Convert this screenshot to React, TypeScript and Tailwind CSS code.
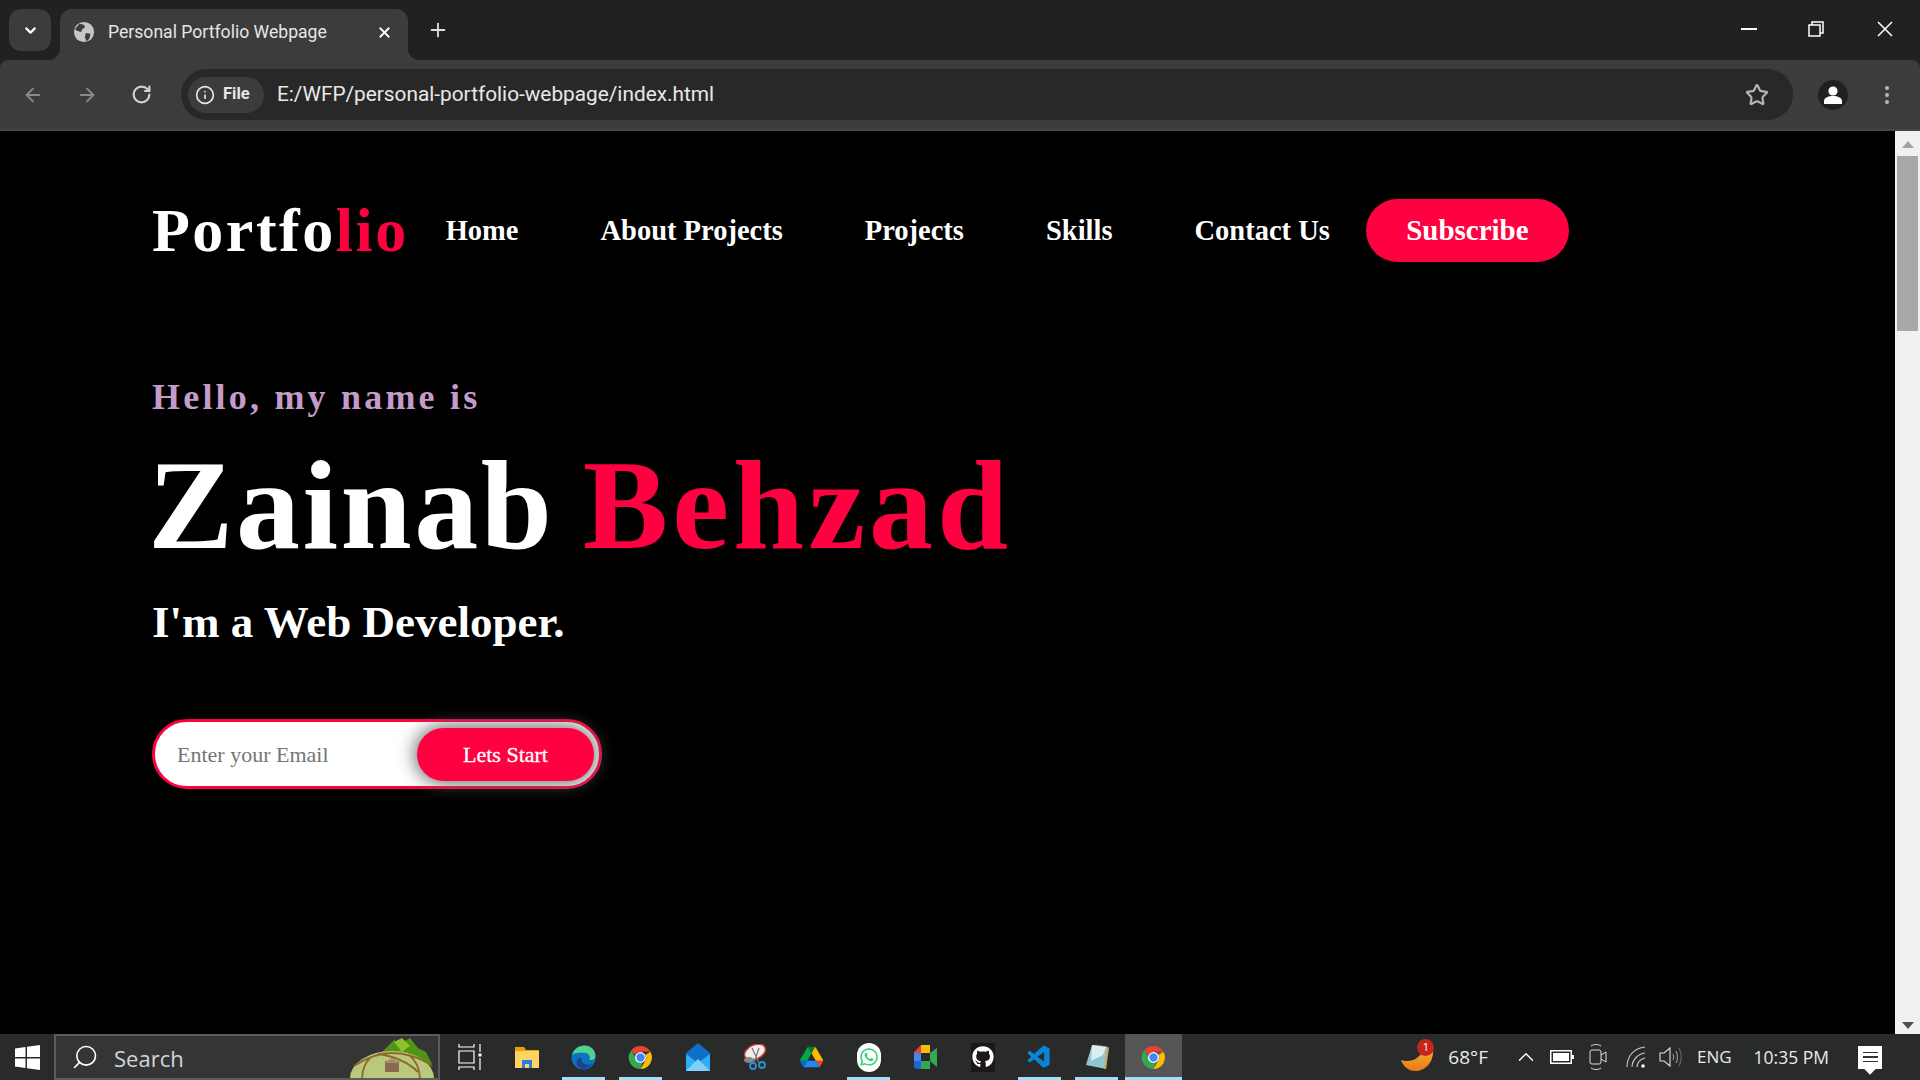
import { FaWhatsapp, FaGithub } from 'react-icons/fa';
import { VscVscode } from 'react-icons/vsc';
import { X, Plus, ChevronDown, ArrowLeft, ArrowRight, RotateCw, Info, Star, EllipsisVertical, Search, ChevronUp } from 'lucide-react';

const serif = "font-['Liberation_Serif',serif]";

// Chrome logo, used twice in the taskbar
function ChromeLogo() {
  return (
    <svg width="25" height="25" viewBox="0 0 48 48">
      <path d="M24 2a22 22 0 0 1 19.05 11H24a11 11 0 0 0-10.2 6.9L6.5 10A22 22 0 0 1 24 2z" fill="#ea4335" />
      <path d="M43.05 13A22 22 0 0 1 24 46l9.5-16.5A11 11 0 0 0 33.5 18.5L43.05 13z" fill="#fbbc04" />
      <path d="M24 46A22 22 0 0 1 6.5 10l9.5 16.5A11 11 0 0 0 28 34.3L24 46z" fill="#34a853" />
      <circle cx="24" cy="24" r="10.5" fill="#fff" />
      <circle cx="24" cy="24" r="8" fill="#4285f4" />
    </svg>
  );
}

function TabBar() {
  return (
    <div className="h-[60px] flex items-start pt-[9px] pl-[9px] bg-[#202221]">
      <div className="w-[42px] h-[42px] rounded-xl bg-[#3c3c3c] flex items-center justify-center">
        <ChevronDown size={17} strokeWidth={3} className="text-white" />
      </div>
      <div className="relative ml-[9px] w-[348px] h-[51px] bg-[#3c3c3c] rounded-t-xl flex items-center pl-[13px] pb-[5px] text-[#e6e6e6]">
        <svg width="22" height="22" viewBox="0 0 24 24">
          <circle cx="12" cy="12" r="11" fill="#c3c7ca" />
          <path d="M7 3l5 1 1 3-3 2-1 3-4-1-3-2zM14 13l5 1-1 5-3 3-2-4z" fill="#3c3c3c" />
        </svg>
        <span className="ml-[13px] font-['Roboto',sans-serif] text-[17.6px] w-[268px] whitespace-nowrap">Personal Portfolio Webpage</span>
        <X size={17} strokeWidth={2.5} className="text-white" />
        <div className="absolute -left-[12px] bottom-0 w-[12px] h-[12px] bg-[radial-gradient(circle_at_0_0,#202221_12px,#3c3c3c_12.5px)]" />
        <div className="absolute -right-[12px] bottom-0 w-[12px] h-[12px] bg-[radial-gradient(circle_at_100%_0,#202221_12px,#3c3c3c_12.5px)]" />
      </div>
      <Plus size={22} className="ml-[19px] mt-[10px] text-[#dedede]" />
      <div className="ml-auto flex items-center h-[40px] text-white">
        <div className="w-[16px] h-[2px] bg-white mr-[51px]" />
        <svg width="16" height="16" viewBox="0 0 16 16" fill="none" stroke="#fff" strokeWidth="1.5" className="mr-[53px]">
          <rect x="1" y="4" width="11" height="11" />
          <path d="M4 4V1h11v11h-3" />
        </svg>
        <svg width="16" height="16" viewBox="0 0 16 16" fill="none" stroke="#fff" strokeWidth="1.5" className="mr-[27px]">
          <path d="M1 1l14 14M15 1L1 15" />
        </svg>
      </div>
    </div>
  );
}

function ToolBar() {
  return (
    <div className="h-[71px] bg-[#3c3c3c] border-b-2 border-[#464646] rounded-t-lg flex items-start pt-[9px]">
      <div className="w-[181px] h-[51px] flex items-center text-[#8a8a8a] shrink-0">
        <ArrowLeft size={22} className="ml-[22px]" />
        <ArrowRight size={22} className="ml-[32px]" />
        <RotateCw size={21} className="ml-[33px] text-[#d0d0d0]" strokeWidth={2.5} />
      </div>
      <div className="w-[1612px] h-[51px] rounded-full bg-[#282828] flex items-center pl-[7px] pr-[24px]">
        <div className="w-[76px] h-[36px] rounded-full bg-[#3c3c3c] flex items-center pl-[7px] gap-[8px] text-[#e6e6e6]">
          <Info size={20} />
          <span className="font-['Roboto',sans-serif] text-[16.500px] font-bold">File</span>
        </div>
        <span className="ml-[13px] font-['Roboto',sans-serif] text-[20.800px] text-[#e8e8e8]">E:/WFP/personal-portfolio-webpage/index.html</span>
        <Star size={24} strokeWidth={2.2} className="ml-auto text-[#b4b4b4]" />
      </div>
      <div className="h-[51px] flex items-center flex-1">
        <div className="ml-[25px] w-[30px] h-[30px] rounded-full bg-[#202221] flex items-center justify-center">
          <svg width="20" height="20" viewBox="0 0 20 20" fill="#fff">
            <circle cx="10" cy="6" r="4.6" />
            <path d="M1 19v-3c0-3 4-5 9-5s9 2 9 5v3z" />
          </svg>
        </div>
        <EllipsisVertical size={24} className="ml-[27px] text-[#b8b8b8]" />
      </div>
    </div>
  );
}

function Page() {
  const links = ['Home', 'About Projects', 'Projects', 'Skills', 'Contact Us'];
  return (
    <main className={`flex-1 bg-black text-white pl-[152px] ${serif}`}>
      <nav className="flex items-center pt-[68px]">
        <h1 className="text-[62px] leading-[63px] font-bold tracking-[2.5px]">
          Portfo<span className="text-[#ff0040]">lio</span>
        </h1>
        <ul className="flex gap-[82px] ml-[37px] mt-[1px] text-[28.500px] font-bold">
          {links.map((l) => (
            <li key={l}>{l}</li>
          ))}
        </ul>
        <button className="ml-[36px] w-[203px] h-[63px] rounded-full bg-[#ff0040] text-[29px] font-bold">Subscribe</button>
      </nav>
      <p className="mt-[115px] text-[36px] leading-[40px] font-bold text-[#c59bc9] tracking-[3.2px]">Hello, my name is</p>
      <h2 className="mt-[23px] -ml-[4px] text-[128px] leading-[130px] font-bold tracking-[2.5px]">
        Zainab <span className="-ml-[6px] tracking-[4px] text-[#ff0040]">Behzad</span>
      </h2>
      <h3 className="mt-[27px] text-[45px] leading-[50px] font-bold">I'm a Web Developer.</h3>
      <div className="mt-[72px] w-[450px] h-[70px] rounded-full border-[3px] border-[#ff0040] bg-white flex items-center pl-[22px] pr-[5px]">
        <input placeholder="Enter your Email" className="flex-1 min-w-0 text-[22px] text-black placeholder:text-[#757575] outline-none bg-transparent" />
        <button className="w-[177px] h-[53px] rounded-full bg-[#ff0040] text-[22px] [-webkit-text-stroke:0.3px_white] shadow-[0_0_18px_2px_#666]">Lets Start</button>
      </div>
    </main>
  );
}

function ScrollBar() {
  return (
    <div className="w-[25px] bg-[#f1f1f1] flex flex-col items-center">
      <svg width="12" height="7" viewBox="0 0 12 7" className="mt-[10px] mb-[8px]"><path d="M6 0l6 7H0z" fill="#a3a3a3" /></svg>
      <div className="w-[21px] h-[175px] bg-[#a8a8a8]" />
      <div className="flex-1" />
      <svg width="12" height="7" viewBox="0 0 12 7" className="mb-[5px]"><path d="M6 7L12 0H0z" fill="#505050" /></svg>
    </div>
  );
}

function Cell({ open, active, children }: { open?: boolean; active?: boolean; children: React.ReactNode }) {
  return (
    <div className={`relative w-[57px] h-full flex items-center justify-center ${active ? 'bg-[#555555]' : ''}`}>
      {children}
      {open && <div className={`absolute bottom-0 h-[3px] bg-[#a6dcf7] ${active ? 'w-full' : 'w-[43px]'}`} />}
    </div>
  );
}

function TaskBar() {
  return (
    <footer className="h-[46px] shrink-0 bg-[#292b2b] flex items-center text-[#eaeaea] font-['Open_Sans',sans-serif]">
      <div className="w-[54px] flex justify-center">
        <svg width="25" height="25" viewBox="0 0 25 25" fill="#fff">
          <path d="M0 3.5l10.5-1.5v10H0zM12 1.8L25 0v12H12zM0 13.5h10.5V23L0 21.5zM12 13.5h13V25l-13-1.8z" />
        </svg>
      </div>
      <div className="relative w-[386px] h-full bg-[#353535] border-2 border-[#5c5c5c] flex items-center pl-[15px] overflow-hidden">
        <Search size={28} strokeWidth={1.4} className="-scale-x-100 text-white" />
        <span className="ml-[15px] mt-[3px] text-[22px] text-[#cfd8de]">Search</span>
        {/* melon hut doodle on the search box */}
        <svg width="90" height="44" viewBox="0 0 90 44" className="absolute right-0 top-0">
          <path d="M32 18l14-14 6 4 10-6 8 10 8 4 6 12-30 4z" fill="#4f9412" />
          <path d="M46 6l8-4 8 8-8 6z" fill="#8cc22a" />
          <ellipse cx="44" cy="42" rx="42" ry="27" fill="#b8c87c" />
          <path d="M6 30c12-8 26-13 38-13s28 4 40 13M22 22c-6 6-8 14-8 22M60 18c8 6 12 16 12 26M30 18c14 2 30 8 40 18" fill="none" stroke="#8d6a2b" strokeWidth="1.800" />
          <rect x="37" y="25" width="14" height="11" fill="#8a6a50" />
          <path d="M36 27l8-5 8 5z" fill="#a98a70" />
        </svg>
      </div>
      <div className="flex h-full items-center ml-[1px]">
        <Cell>
          <svg width="24" height="28" viewBox="0 0 24 28" fill="none" stroke="#fff" strokeWidth="1.2">
            <path d="M1 1v3h15V1M1 8h15v12H1zM1 27v-3h15v3M22 1v8M22 15v12" />
            <rect x="20.5" y="10.5" width="3" height="3" fill="#fff" stroke="none" />
          </svg>
        </Cell>
        <Cell>
          <svg width="24" height="24" viewBox="0 0 24 24">
            <path d="M0 2h9l2 3h13v5H0z" fill="#e8a20c" />
            <path d="M0 6h24v17H0z" fill="#fcd462" />
            <path d="M7 23v-8h10v8h-3v-4h-4v4z" fill="#2a7de1" />
          </svg>
        </Cell>
        <Cell open>
          <svg width="25" height="25" viewBox="0 0 48 48">
            <circle cx="24" cy="24" r="23" fill="#0c72c4" />
            <path d="M2 20C5 8 16 1 26 1c12 0 21 9 21 20 0 6-6 9-12 7 3-5 0-13-10-13C14 15 4 16 2 20z" fill="#4ed28c" />
            <path d="M20 27c0 7 7 12 14 11 3 0 6-2 8-4-4 8-13 13-22 11C10 42 8 32 14 26c2-2 6-2 6 1z" fill="#1f3f8f" />
          </svg>
        </Cell>
        <Cell open><ChromeLogo /></Cell>
        <Cell>
          <svg width="24" height="28" viewBox="0 0 24 28">
            <path d="M0 10L12 0l12 10v17H0z" fill="#0f6fc6" />
            <path d="M0 11l12 9 12-9v17H0z" fill="#2eb0f5" />
            <path d="M0 28l12-12 12 12z" fill="#7fd0fa" />
          </svg>
        </Cell>
        <Cell>
          <svg width="24" height="26" viewBox="0 0 24 26" fill="none">
            <ellipse cx="12" cy="8" rx="11" ry="7" transform="rotate(-25 12 8)" fill="#eee" stroke="#d93a3a" strokeWidth="1.5" />
            <ellipse cx="6" cy="16" rx="5" ry="3" fill="#888" />
            <path d="M9 4l7 15M16 4l-5 15" stroke="#777" strokeWidth="1.2" />
            <circle cx="10" cy="22" r="3" stroke="#2b8fd8" strokeWidth="1.8" />
            <circle cx="19" cy="21" r="3" stroke="#2b8fd8" strokeWidth="1.8" />
          </svg>
        </Cell>
        <Cell>
          <svg width="23" height="24" viewBox="0 0 87 78">
            <path d="M6.6 66.9l3.9 6.7c.8 1.4 2 2.5 3.3 3.3L27.5 53H0c0 1.6.4 3.100 1.2 4.500z" fill="#0066da" />
            <path d="M43.7 25L30 1.200C28.600 2 27.500 3.100 26.700 4.500L1.200 48.500C.4 49.900 0 51.400 0 53h27.500z" fill="#00ac47" />
            <path d="M73.600 76.900c1.300-.8 2.500-1.900 3.300-3.300l1.600-2.750 7.650-13.250c.8-1.400 1.200-2.900 1.200-4.500H59.800l5.850 11.500z" fill="#ea4335" />
            <path d="M43.700 25L57.400 1.200C56.100.4 54.500 0 52.900 0H34.500c-1.600 0-3.200.45-4.500 1.200z" fill="#00832d" />
            <path d="M59.800 53H27.500L13.800 76.800c1.300.8 2.900 1.200 4.500 1.200h50.800c1.600 0 3.200-.45 4.500-1.200z" fill="#2684fc" />
            <path d="M73.400 26.500L60.700 4.500c-.8-1.400-2-2.500-3.300-3.300L43.700 25l16.100 28h27.450c0-1.600-.4-3.100-1.200-4.500z" fill="#ffba00" />
          </svg>
        </Cell>
        <Cell open>
          <div className="w-[24px] h-[29px] rounded-full bg-white flex items-center justify-center">
            <FaWhatsapp size={20} className="text-[#25d366]" />
          </div>
        </Cell>
        <Cell>
          <svg width="23" height="24" viewBox="0 0 23 24">
            <path d="M0 7l7-7h9v8H7v8H0z" fill="#ea4335" />
            <path d="M7 0h9v8H7z" fill="#fbbc04" />
            <path d="M0 8h7v8H0z" fill="#4285f4" />
            <path d="M0 16h7v8H3c-2 0-3-1-3-3z" fill="#1967d2" />
            <path d="M7 16h9v8H7z" fill="#34a853" />
            <path d="M16 8v8l7 6V3z" fill="#34a853" />
          </svg>
        </Cell>
        <Cell>
          <div className="w-[24px] h-[29px] bg-[#1b1817] flex items-center justify-center">
            <FaGithub size={22} className="text-white" />
          </div>
        </Cell>
        <Cell open><VscVscode size={27} className="text-[#0a84d6]" /></Cell>
        <Cell open>
          <svg width="24" height="28" viewBox="0 0 24 28">
            <path d="M7 2l16 2-2 22-20-4z" fill="#8fc6cf" />
            <path d="M8 1l15 3 1 1-3 21h-2l3-21z" fill="#d9a44e" />
            <path d="M7 2l14 2-3 8-12 6z" fill="#d8eef0" />
          </svg>
        </Cell>
        <Cell open active><ChromeLogo /></Cell>
      </div>
      <div className="ml-auto flex items-center h-full">
        <div className="relative w-[34px] h-[28px]">
          <svg width="34" height="28" viewBox="0 0 34 28">
            <defs>
              <linearGradient id="flame" x1="0" y1="0" x2="0" y2="1">
                <stop offset="0" stopColor="#fbb52c" />
                <stop offset="1" stopColor="#e8791a" />
              </linearGradient>
            </defs>
            <path d="M1 17c8 3 20 0 24-14 3-1 7-1 8 3 1 14-8 22-18 22C8 28 3 23 1 17z" fill="url(#flame)" />
          </svg>
          <div className="absolute left-[17px] -top-[4px] w-[17px] h-[17px] rounded-full bg-[#c9241a] flex items-center justify-center text-[11px] text-white">1</div>
        </div>
        <span className="ml-[14px] text-[19px] leading-none">68°F</span>
        <ChevronUp size={26} strokeWidth={1.3} className="ml-[25px] text-white" />
        <svg width="24" height="14" viewBox="0 0 24 14" className="ml-[11px]">
          <rect x=".75" y=".75" width="20.500" height="12.500" fill="none" stroke="#fff" strokeWidth="1.500" />
          <rect x="3" y="3" width="16" height="8" fill="#fff" />
          <rect x="22" y="5" width="2" height="4" fill="#fff" />
        </svg>
        <svg width="18" height="28" viewBox="0 0 18 28" fill="none" stroke="#ddd" strokeWidth="1" className="ml-[15px]">
          <path d="M2 3c3-2 7-2 10 0M2 25c3 2 7 2 10 0" />
          <rect x="1" y="7" width="11" height="14" rx="2" />
          <path d="M12 12l5-3v10l-5-3" />
        </svg>
        <svg width="20" height="22" viewBox="0 0 20 22" fill="none" stroke="#c8c8c8" strokeWidth="1.100" className="ml-[19px]">
          <path d="M1 21C1 10 8 2 19 1M6 21c0-7 6-13 13-14M11 21c0-4 3-8 8-9" />
          <circle cx="17" cy="20" r="1.800" fill="#fff" stroke="none" />
        </svg>
        <svg width="24" height="24" viewBox="0 0 24 24" fill="none" stroke="#ddd" strokeWidth="1.100" className="ml-[13px]">
          <path d="M1 8h4l6-5v18l-6-5H1z" />
          <path d="M14 9c1 2 1 4 0 6M17 6c2 4 2 8 0 12" stroke="#999" />
          <path d="M20 3c3 6 3 12 0 18" stroke="#666" />
        </svg>
        <span className="ml-[14px] text-[17px]">ENG</span>
        <span className="ml-[22px] text-[17.500px]">10:35 PM</span>
        <div className="ml-[29px] mr-[38px] relative w-[24px] h-[23px] bg-white flex flex-col gap-[3px] items-center justify-center">
          <div className="w-[15px] h-[1.500px] bg-[#333]" />
          <div className="w-[15px] h-[1.500px] bg-[#333]" />
          <div className="w-[15px] h-[1.500px] bg-[#333]" />
          <div className="absolute -bottom-[4px] w-[8px] h-[8px] rotate-45 bg-white" />
        </div>
      </div>
    </footer>
  );
}

export default function App() {
  return (
    <div className="w-[1920px] h-[1080px] flex flex-col overflow-hidden bg-black">
      <header className="shrink-0 bg-[#202221]">
        <TabBar />
        <ToolBar />
      </header>
      <div className="flex-1 flex min-h-0">
        <Page />
        <ScrollBar />
      </div>
      <TaskBar />
    </div>
  );
}
